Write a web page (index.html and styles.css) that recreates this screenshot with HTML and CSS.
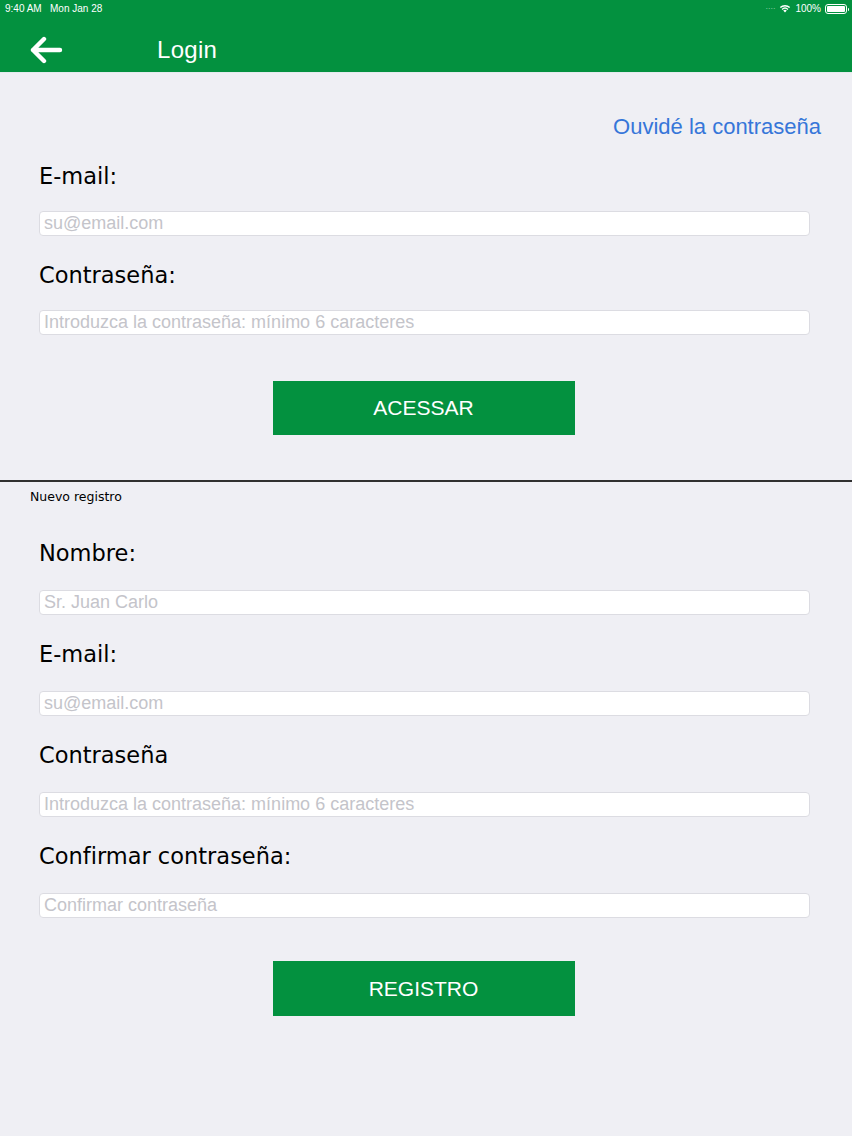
FILE: index.html
```html
<!DOCTYPE html>
<html lang="es">
<head>
  <meta charset="UTF-8">
  <title>Login</title>
  <link rel="stylesheet" href="styles.css">
</head>
<body>
  <header class="topbar">
    <div class="status">
      <span class="status-left">9:40 AM&nbsp;&nbsp;&nbsp;Mon Jan 28</span>
      <span class="status-right">
        <span class="signal">....</span>
        <svg class="wifi" width="12" height="9" viewBox="0 0 12 9"><path d="M6 8.6 L4.2 6.6 A2.6 2.6 0 0 1 7.8 6.6 Z M2.6 4.9 A5 5 0 0 1 9.4 4.9 L8.5 5.9 A3.7 3.7 0 0 0 3.5 5.9 Z M0.8 3 A7.7 7.7 0 0 1 11.2 3 L10.2 4 A6.3 6.3 0 0 0 1.8 4 Z" fill="#fff"/></svg>
        <span>100%</span>
        <span class="battery"><span class="battery-fill"></span></span>
      </span>
    </div>
    <nav class="navbar">
      <svg class="back" width="34" height="28" viewBox="0 0 34 28"><path d="M31 14 H4 M15 3 L4 14 L15 25" fill="none" stroke="#fff" stroke-width="4.4" stroke-linecap="round" stroke-linejoin="round"/></svg>
      <h1>Login</h1>
    </nav>
  </header>

  <main>
    <section class="login">
      <div class="forgot"><a href="#">Ouvidé la contraseña</a></div>

      <div class="field first">
        <label for="email">E-mail:</label>
        <input type="text" id="email" placeholder="su@email.com">
      </div>
      <div class="field">
        <label for="pass">Contraseña:</label>
        <input type="password" id="pass" placeholder="Introduzca la contraseña: mínimo 6 caracteres">
      </div>

      <div class="actions"><button class="btn login-btn">ACESSAR</button></div>
    </section>

    <section class="register">
      <div class="section-title">Nuevo registro</div>

      <div class="field first">
        <label for="name">Nombre:</label>
        <input type="text" id="name" placeholder="Sr. Juan Carlo">
      </div>
      <div class="field">
        <label for="remail">E-mail:</label>
        <input type="text" id="remail" placeholder="su@email.com">
      </div>
      <div class="field">
        <label for="rpass">Contraseña</label>
        <input type="password" id="rpass" placeholder="Introduzca la contraseña: mínimo 6 caracteres">
      </div>
      <div class="field">
        <label for="rconfirm">Confirmar contraseña:</label>
        <input type="password" id="rconfirm" placeholder="Confirmar contraseña">
      </div>

      <div class="actions"><button class="btn register-btn">REGISTRO</button></div>
    </section>
  </main>
</body>
</html>
```

FILE: styles.css
```css
* { box-sizing: border-box; }
body { margin: 0; background: #efeff4; font-family: "DejaVu Sans", Verdana, sans-serif; color: #000; height: 1136px; }

.topbar { background: #03913f; color: #fff; border-bottom: 1px solid #e4eaee; }
.status { height: 17px; display: flex; justify-content: space-between; align-items: center; padding: 0 5px 0 5px; font-family: "Liberation Sans", Arial, sans-serif; font-size: 10px; }
.status-right { display: flex; align-items: center; gap: 4px; }
.signal { color: #7fc89e; font-size: 9px; letter-spacing: 0; margin-top: -5px; }
.battery { width: 22px; height: 10px; border: 1px solid #fff; border-radius: 3px; padding: 1px; position: relative; }
.battery::after { content: ""; position: absolute; right: -3px; top: 3px; width: 1.5px; height: 3px; background: #fff; border-radius: 0 1px 1px 0; }
.battery-fill { display: block; height: 100%; background: #fff; border-radius: 1px; }

.navbar { height: 55px; display: flex; align-items: center; padding: 10px 0 0 29px; }
.navbar h1 { margin: 0 0 0 94px; font-family: "Liberation Sans", Arial, sans-serif; font-size: 24px; font-weight: normal; letter-spacing: 0.3px; }

.forgot { text-align: right; padding: 42px 31px 0 0; font-family: "Liberation Sans", Arial, sans-serif; font-size: 22px; line-height: 24px; }
.forgot a { color: #3676d9; text-decoration: none; }

.field { padding: 26px 42px 0 39px; }
.login .field.first { padding-top: 24px; }
.field label { display: block; font-size: 22.5px; line-height: 26px; margin-bottom: 24px; }
.login .field label { margin-bottom: 22px; }
.field input { display: block; width: 100%; height: 25px; margin: 0; padding: 0 4px; border: 1px solid #dcdce2; border-radius: 4px; background: #fff; font-family: "Liberation Sans", Arial, sans-serif; font-size: 18px; outline: none; }
.field input::placeholder { color: #c4c4ca; }

.actions { display: flex; justify-content: center; padding-right: 5px; }
.btn { width: 302px; height: 54px; background: #03913f; color: #fff; border: none; border-radius: 0; font-family: "Liberation Sans", Arial, sans-serif; font-size: 21px; cursor: pointer; }
.login .actions { padding-top: 46px; padding-bottom: 45px; }

.register { border-top: 2px solid #303030; }
.section-title { padding: 7px 0 0 30px; font-size: 12.5px; line-height: 16px; }
.register .field.first { padding-top: 35px; }
.register .actions { padding-top: 43px; }
.register-btn { height: 55px; }
```
